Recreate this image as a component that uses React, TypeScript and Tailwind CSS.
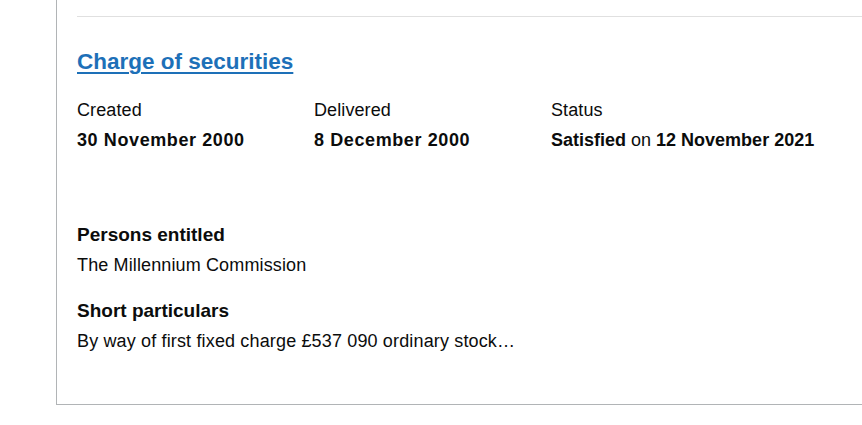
import React from "react";

const font = { fontFamily: '"Liberation Sans", Arial, sans-serif' };

export default function App() {
  return (
    <div className="w-[862px] h-[425px] overflow-hidden bg-white text-[#0b0c0c]" style={font}>
      <div className="ml-[56px] w-[1000px] h-[405px] border-l border-b border-[#b1b4b6] pl-[20px]">
        <div className="pt-[16px]">
          <div className="h-px bg-[#e0e0e0]" />
        </div>
        <h3 className="mt-[31px] text-[22.5px] leading-[28px] font-bold tracking-[0px]">
          <a href="#" className="text-[#1d70b8] underline decoration-[2px] underline-offset-[3px]">
            Charge of securities
          </a>
        </h3>
        <div className="mt-[22px] grid grid-cols-[237px_237px_300px]">
          <div>
            <div className="text-[18px] leading-[24px] tracking-[0.1px]">Created</div>
            <div className="mt-[6px] text-[18px] leading-[24px] font-bold tracking-[0.6px]">30 November 2000</div>
          </div>
          <div>
            <div className="text-[18px] leading-[24px] tracking-[0.1px]">Delivered</div>
            <div className="mt-[6px] text-[18px] leading-[24px] font-bold tracking-[0.6px]">8 December 2000</div>
          </div>
          <div>
            <div className="text-[18px] leading-[24px] tracking-[0.1px]">Status</div>
            <div className="mt-[6px] text-[18px] leading-[24px] whitespace-nowrap">
              <span className="font-bold">Satisfied</span> on{" "}
              <span className="font-bold">12 November 2021</span>
            </div>
          </div>
        </div>
        <h4 className="mt-[71px] text-[19px] leading-[24px] font-bold">Persons entitled</h4>
        <p className="mt-[6px] text-[18px] leading-[24px] tracking-[0.13px]">The Millennium Commission</p>
        <h4 className="mt-[22px] text-[19px] leading-[24px] font-bold">Short particulars</h4>
        <p className="mt-[6px] text-[18px] leading-[24px] tracking-[0.15px]">By way of first fixed charge £537 090 ordinary stock…</p>
      </div>
    </div>
  );
}
